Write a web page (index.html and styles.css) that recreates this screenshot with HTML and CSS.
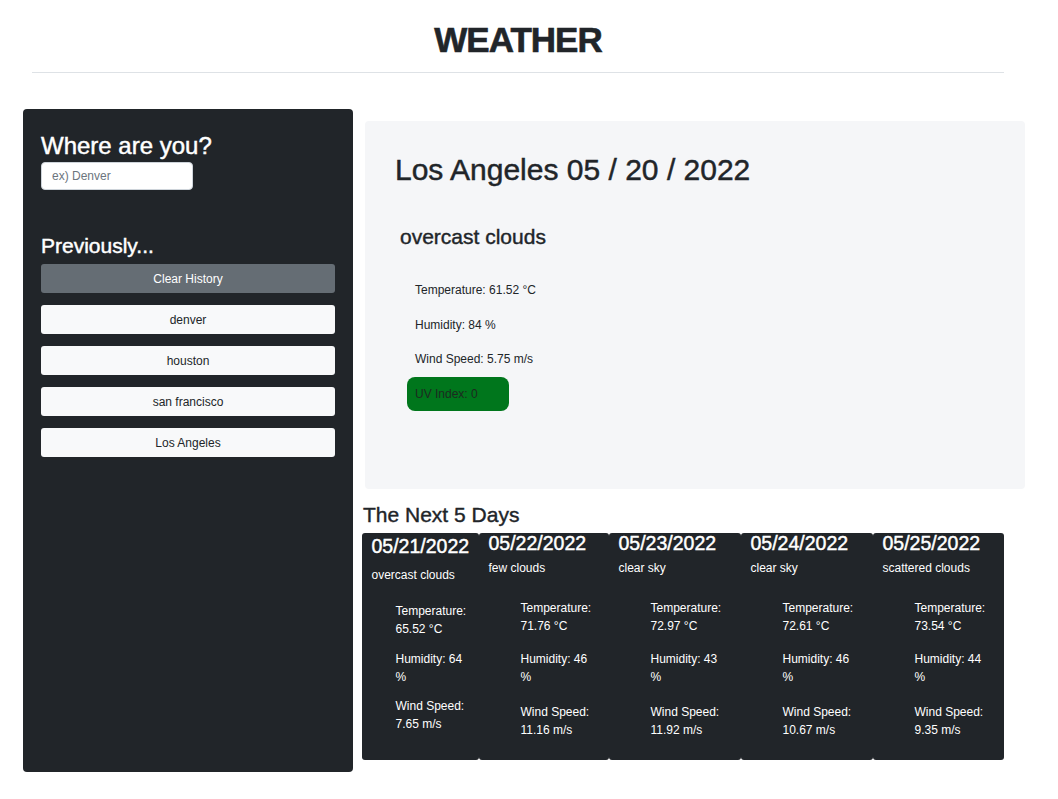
FILE: index.html
```html
<!DOCTYPE html>
<html lang="en">
<head>
<meta charset="utf-8">
<title>Weather</title>
<link rel="stylesheet" href="styles.css">
</head>
<body>
<header class="site-header">
  <h1 class="site-title">WEATHER</h1>
</header>
<main class="layout">
  <aside class="sidebar">
    <h2 class="sidebar-heading">Where are you?</h2>
    <input class="search-input" type="text" placeholder="ex) Denver">
    <h3 class="history-heading">Previously...</h3>
    <div class="history-list">
      <button class="history-btn history-btn--clear">Clear History</button>
      <button class="history-btn">denver</button>
      <button class="history-btn">houston</button>
      <button class="history-btn">san francisco</button>
      <button class="history-btn">Los Angeles</button>
    </div>
  </aside>
  <section class="content">
    <div class="current-card">
      <h2 class="city-title">Los Angeles 05 / 20 / 2022</h2>
      <h3 class="current-desc">overcast clouds</h3>
      <div class="current-stats">
        <p class="stat">Temperature: 61.52 °C</p>
        <p class="stat">Humidity: 84 %</p>
        <p class="stat">Wind Speed: 5.75 m/s</p>
        <p class="stat uv-badge">UV Index: 0</p>
      </div>
    </div>
    <h3 class="forecast-heading">The Next 5 Days</h3>
    <div class="forecast-row">
      <div class="forecast-card forecast-card--first">
        <h4 class="forecast-date">05/21/2022</h4>
        <p class="forecast-desc">overcast clouds</p>
        <div class="forecast-stats">
          <p class="fstat">Temperature: 65.52 °C</p>
          <p class="fstat">Humidity: 64 %</p>
          <p class="fstat">Wind Speed: 7.65 m/s</p>
        </div>
      </div>
      <div class="forecast-card">
        <h4 class="forecast-date">05/22/2022</h4>
        <p class="forecast-desc">few clouds</p>
        <div class="forecast-stats">
          <p class="fstat">Temperature: 71.76 °C</p>
          <p class="fstat">Humidity: 46 %</p>
          <p class="fstat">Wind Speed: 11.16 m/s</p>
        </div>
      </div>
      <div class="forecast-card">
        <h4 class="forecast-date">05/23/2022</h4>
        <p class="forecast-desc">clear sky</p>
        <div class="forecast-stats">
          <p class="fstat">Temperature: 72.97 °C</p>
          <p class="fstat">Humidity: 43 %</p>
          <p class="fstat">Wind Speed: 11.92 m/s</p>
        </div>
      </div>
      <div class="forecast-card">
        <h4 class="forecast-date">05/24/2022</h4>
        <p class="forecast-desc">clear sky</p>
        <div class="forecast-stats">
          <p class="fstat">Temperature: 72.61 °C</p>
          <p class="fstat">Humidity: 46 %</p>
          <p class="fstat">Wind Speed: 10.67 m/s</p>
        </div>
      </div>
      <div class="forecast-card">
        <h4 class="forecast-date">05/25/2022</h4>
        <p class="forecast-desc">scattered clouds</p>
        <div class="forecast-stats">
          <p class="fstat">Temperature: 73.54 °C</p>
          <p class="fstat">Humidity: 44 %</p>
          <p class="fstat">Wind Speed: 9.35 m/s</p>
        </div>
      </div>
    </div>
  </section>
</main>
</body>
</html>
```

FILE: styles.css
```css
* {
  box-sizing: border-box;
}

body {
  margin: 0;
  font-family: "Liberation Sans", Arial, sans-serif;
  font-size: 12px;
  line-height: 18px;
  color: #212529;
  background: #fff;
}

.site-header {
  margin: 0 54px 0 32px;
  padding: 19px 0 11px;
  border-bottom: 1px solid #dee2e6;
}

.site-title {
  margin: 0;
  text-align: center;
  font-size: 35px;
  line-height: 42px;
  font-weight: 700;
  letter-spacing: -1px;
  color: #212529;
  -webkit-text-stroke: 0.6px currentColor;
}

.layout {
  display: flex;
  align-items: flex-start;
  margin-top: 36px;
  padding-left: 23px;
}

.sidebar {
  width: 330px;
  height: 663px;
  padding: 22px 18px;
  background: #212529;
  color: #fff;
  border-radius: 4px;
}

.sidebar-heading {
  margin: 0;
  font-size: 24px;
  line-height: 29px;
  font-weight: 500;
  -webkit-text-stroke: 0.45px currentColor;
}

.search-input {
  display: block;
  margin-top: 2px;
  width: 152px;
  height: 28px;
  padding: 0 10px;
  border: 1px solid #ced4da;
  border-radius: 4px;
  background: #fff;
  font-family: "Liberation Sans", Arial, sans-serif;
  font-size: 12px;
  color: #212529;
}

.search-input::placeholder {
  color: #6c757d;
}

.history-heading {
  margin: 43px 0 6px;
  font-size: 21px;
  line-height: 25px;
  font-weight: 500;
  -webkit-text-stroke: 0.45px currentColor;
}

.history-list {
  display: flex;
  flex-direction: column;
  gap: 12px;
}

.history-btn {
  display: block;
  width: 100%;
  height: 29px;
  padding: 1px 0 0;
  border: 0;
  border-radius: 3px;
  background: #f8f9fa;
  color: #212529;
  font-family: "Liberation Sans", Arial, sans-serif;
  font-size: 12px;
  line-height: 28px;
  text-align: center;
}

.history-btn--clear {
  background: #656d74;
  color: #fff;
}

.content {
  margin-left: 9px;
  width: 663px;
}

.current-card {
  margin: 12px 0 0 3px;
  width: 660px;
  height: 368px;
  padding: 31px 30px 0;
  background: #f5f6f8;
  border-radius: 4px;
}

.city-title {
  margin: 0;
  font-size: 30px;
  line-height: 36px;
  font-weight: 500;
  -webkit-text-stroke: 0.45px currentColor;
}

.current-desc {
  margin: 36px 0 0 5px;
  font-size: 21px;
  line-height: 25px;
  font-weight: 500;
  -webkit-text-stroke: 0.4px currentColor;
}

.current-stats {
  margin: 32px 0 0 20px;
}

.stat {
  margin: 0 0 16.5px;
  line-height: 18px;
}

.uv-badge {
  width: 102px;
  margin: -8px 0 0 -8px;
  padding: 8px;
  background: #00761c;
  border-radius: 8px;
  color: #1d2a20;
}

.forecast-heading {
  margin: 13px 0 6px 1px;
  font-size: 21px;
  line-height: 25px;
  font-weight: 500;
  -webkit-text-stroke: 0.4px currentColor;
}

.forecast-row {
  display: grid;
  grid-template-columns: 117px 130px 132px 132px 131px;
  width: 642px;
}

.forecast-card {
  height: 227px;
  padding: 0 9.5px;
  background: #212529;
  color: #fff;
  border-radius: 3px;
}

.forecast-date {
  margin: 0;
  font-size: 19.5px;
  line-height: 20px;
  font-weight: 500;
  -webkit-text-stroke: 0.45px currentColor;
}

.forecast-desc {
  margin: 6px 0 0;
  line-height: 18px;
}

.forecast-stats {
  margin-top: 22px;
  padding-left: 32px;
}

.fstat {
  width: 76px;
  margin: 0;
  line-height: 18px;
}

.fstat:nth-child(2) {
  margin-top: 15px;
}

.fstat:nth-child(3) {
  margin-top: 17.4px;
}

.forecast-card--first {
  padding-top: 2.5px;
}

.forecast-card--first .forecast-desc {
  margin-top: 10.6px;
}

.forecast-card--first .forecast-stats {
  margin-top: 17.7px;
  padding-left: 24px;
}

.forecast-card--first .fstat {
  width: 74px;
}

.forecast-card--first .fstat:nth-child(2) {
  margin-top: 12.3px;
}

.forecast-card--first .fstat:nth-child(3) {
  margin-top: 11.4px;
}
```
